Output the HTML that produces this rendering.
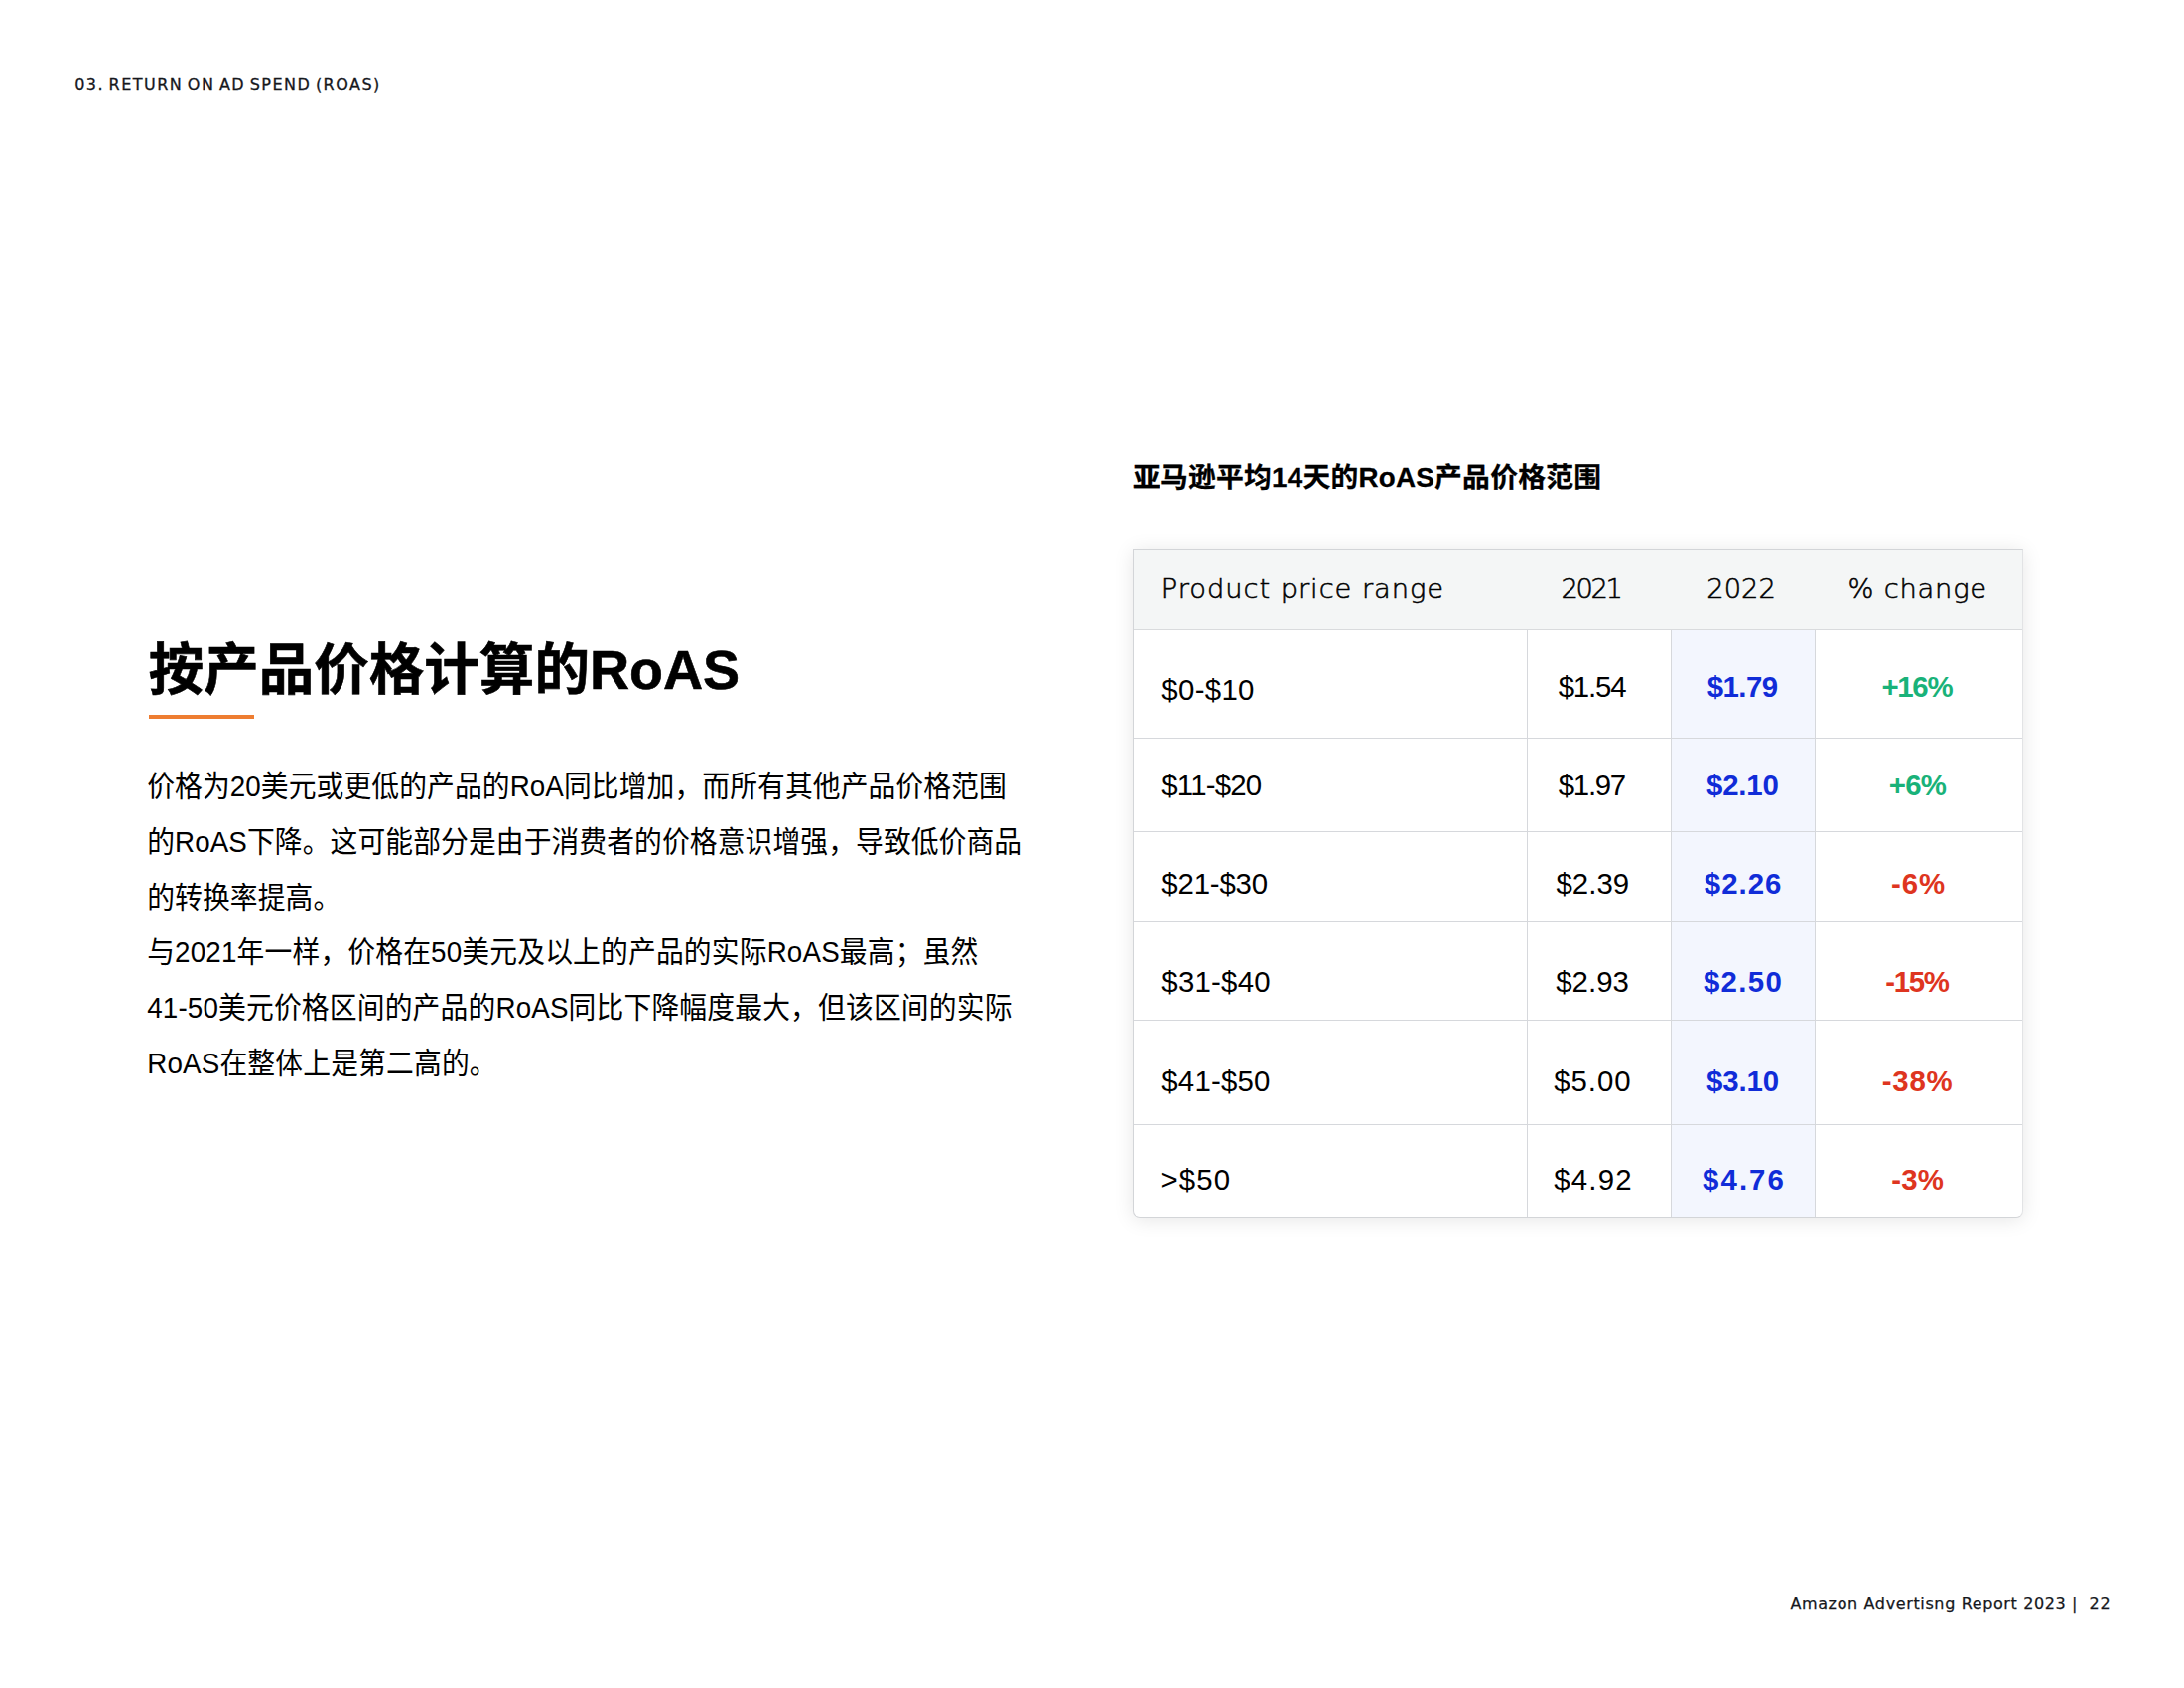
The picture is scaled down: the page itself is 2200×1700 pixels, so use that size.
<!DOCTYPE html>
<html lang="zh-CN">
<head>
<meta charset="utf-8">
<title>按产品价格计算的RoAS</title>
<style>
  html, body { margin: 0; padding: 0; background: #ffffff; }
  body { width: 2200px; height: 1700px; position: relative; overflow: hidden;
         font-family: "Liberation Sans", "Noto Sans CJK SC", sans-serif; color: #000; }
  .abs { position: absolute; white-space: nowrap; margin: 0; padding: 0; }
  .abs > span, td > span, th > span { position: relative; display: inline-block; }

  /* running header / footer */
  .crumb  { left: 75px; top: 74px; font-size: 16.0px; line-height: 20px;
            color: #15171c; font-family: "DejaVu Sans", "Liberation Sans", sans-serif;
            word-spacing: -2.0px; -webkit-text-stroke: 0.3px #15171c; }
  .footer { left: 1803px; top: 1603px; font-size: 16.0px; line-height: 20px;
            color: #15171c; font-family: "DejaVu Sans", "Liberation Sans", sans-serif; white-space: pre;
            -webkit-text-stroke: 0.25px #15171c; }

  /* left column */
  h1.title { left: 150px; top: 632px; font-size: 55.56px; line-height: 80px; font-weight: 700;
             font-family: "Liberation Sans", "Noto Sans CJK SC", sans-serif; color: #000;
             -webkit-text-stroke: 0.6px #000; }
  .rule { left: 150px; top: 720px; width: 106px; height: 4px; background: #ee7d31; }
  .body { position: absolute; left: 148.2px; top: 765.0px;
           transform: scaleY(1.07); transform-origin: 0 0; }
  .body p { margin: 0; font-size: 27.78px; line-height: 51.925px; color: #000; }

  /* right column */
  h2.sub { left: 1141px; top: 459px; font-size: 27.78px; line-height: 40px; font-weight: 700; color: #000;
           -webkit-text-stroke: 0.3px #000; }

  table.grid { position: absolute; left: 1141px; top: 553px; width: 897px; height: 674px;
          border-collapse: separate; border-spacing: 0; table-layout: fixed;
          border: 1px solid #d3d5d8; border-right-color: #e2e3e5; border-radius: 0 0 7px 7px; overflow: hidden;
          box-sizing: border-box; font-family: "Liberation Sans", sans-serif;
          background: #fff; box-shadow: 0 2px 20px rgba(0,0,0,0.10); }
  table.grid th, table.grid td { padding: 0; box-sizing: border-box; text-align: center;
          vertical-align: middle; white-space: nowrap; }
  table.grid thead th { background: #f4f6f6; font-family: "DejaVu Sans", "Liberation Sans", sans-serif;
          font-weight: 200; font-size: 27.3px; color: #000; -webkit-text-stroke: 0.55px #000;
          border-bottom: 1px solid #d9dbdd; height: 80px; }
  table.grid tbody td { font-size: 29.4px; color: #000; border-bottom: 1px solid #d6d8dc;
          border-right: 1px solid #d6d8dc; }
  table.grid tbody tr:last-child td { border-bottom: 0; }
  table.grid tbody td:last-child { border-right: 0; }
  table.grid .c1 { text-align: left; padding-left: 29px; }
  table.grid td.y22 { background: #f3f6fe; color: #102cd8; font-weight: 700; }
  table.grid td.up { color: #19b279; font-weight: 700; }
  table.grid td.dn { color: #de3520; font-weight: 700; }
</style>
</head>
<body>
<div class="abs crumb"><span style="letter-spacing:1.48px;left:0.15px;top:1.92px">03. RETURN ON AD SPEND (ROAS)</span></div>

<h1 class="abs title"><span style="letter-spacing:-0.01px;left:-0.37px;top:2.88px">按产品价格计算的RoAS</span></h1>
<div class="abs rule"></div>

<div class="body">
  <p style="width:887.2px;letter-spacing:0.10px">价格为20美元或更低的产品的RoA同比增加，而所有其他产品价格范围的RoAS下降。这可能部分是由于消费者的价格意识增强，导致低价商品的转换率提高。</p>
  <p style="width:874.5px;letter-spacing:0.17px">与2021年一样，价格在50美元及以上的产品的实际RoAS最高；虽然41-50美元价格区间的产品的RoAS同比下降幅度最大，但该区间的实际RoAS在整体上是第二高的。</p>
</div>

<h2 class="abs sub"><span style="letter-spacing:0.26px;left:-0.12px;top:1.88px">亚马逊平均14天的RoAS产品价格范围</span></h2>

<table class="grid">
  <colgroup><col style="width:397px"><col style="width:145px"><col style="width:145px"><col></colgroup>
  <thead>
    <tr><th class="c1"><span style="letter-spacing:0.94px;left:-1.16px;top:-1.06px">Product price range</span></th><th><span style="letter-spacing:-2.37px;left:-8.97px;top:-1.06px">2021</span></th><th><span style="letter-spacing:0.03px;left:-2.39px;top:-1.06px">2022</span></th><th><span style="letter-spacing:0.78px;left:-1.31px;top:-1.06px">% change</span></th></tr>
  </thead>
  <tbody>
    <tr style="height:110px"><td class="c1"><span style="letter-spacing:0.31px;left:-0.68px;top:6.38px">$0-$10</span></td><td><span style="letter-spacing:-1.17px;left:-7.46px;top:3.42px">$1.54</span></td><td class="y22"><span style="letter-spacing:-0.54px;left:-0.86px;top:3.42px">$1.79</span></td><td class="up"><span style="letter-spacing:-1.30px;left:-2.18px;top:3.42px">+16%</span></td></tr>
    <tr style="height:94px"><td class="c1"><span style="letter-spacing:-0.83px;left:-0.68px;top:0.48px">$11-$20</span></td><td><span style="letter-spacing:-1.30px;left:-7.67px;top:0.48px">$1.97</span></td><td class="y22"><span style="letter-spacing:-0.20px;left:-0.72px;top:0.48px">$2.10</span></td><td class="up"><span style="letter-spacing:-0.68px;left:-1.50px;top:0.48px">+6%</span></td></tr>
    <tr style="height:91px"><td class="c1"><span style="letter-spacing:-0.18px;left:-0.68px;top:6.88px">$21-$30</span></td><td><span style="letter-spacing:0.05px;left:-6.70px;top:6.88px">$2.39</span></td><td class="y22"><span style="letter-spacing:1.03px;left:0.14px;top:6.88px">$2.26</span></td><td class="dn"><span style="letter-spacing:0.91px;left:-0.56px;top:6.88px">-6%</span></td></tr>
    <tr style="height:99px"><td class="c1"><span style="letter-spacing:0.24px;left:-0.68px;top:11.02px">$31-$40</span></td><td><span style="letter-spacing:0.01px;left:-6.95px;top:11.02px">$2.93</span></td><td class="y22"><span style="letter-spacing:1.33px;top:11.02px">$2.50</span></td><td class="dn"><span style="letter-spacing:-1.30px;left:-2.06px;top:11.02px">-15%</span></td></tr>
    <tr style="height:105px"><td class="c1"><span style="letter-spacing:0.19px;left:-0.68px;top:8.88px">$41-$50</span></td><td><span style="letter-spacing:0.97px;left:-6.58px;top:8.88px">$5.00</span></td><td class="y22"><span style="letter-spacing:-0.12px;left:-0.53px;top:8.88px">$3.10</span></td><td class="dn"><span style="letter-spacing:0.77px;left:-1.34px;top:8.88px">-38%</span></td></tr>
    <tr style="height:93px"><td class="c1"><span style="letter-spacing:1.13px;left:-1.59px;top:8.52px">&gt;$50</span></td><td><span style="letter-spacing:1.20px;left:-5.95px;top:8.52px">$4.92</span></td><td class="y22"><span style="letter-spacing:2.07px;left:1.00px;top:8.52px">$4.76</span></td><td class="dn"><span style="letter-spacing:0.10px;left:-1.37px;top:8.52px">-3%</span></td></tr>
  </tbody>
</table>

<div class="abs footer"><span style="letter-spacing:0.63px;left:0.40px;top:1.96px">Amazon Advertisng Report 2023 |  22</span></div>

</body>
</html>
